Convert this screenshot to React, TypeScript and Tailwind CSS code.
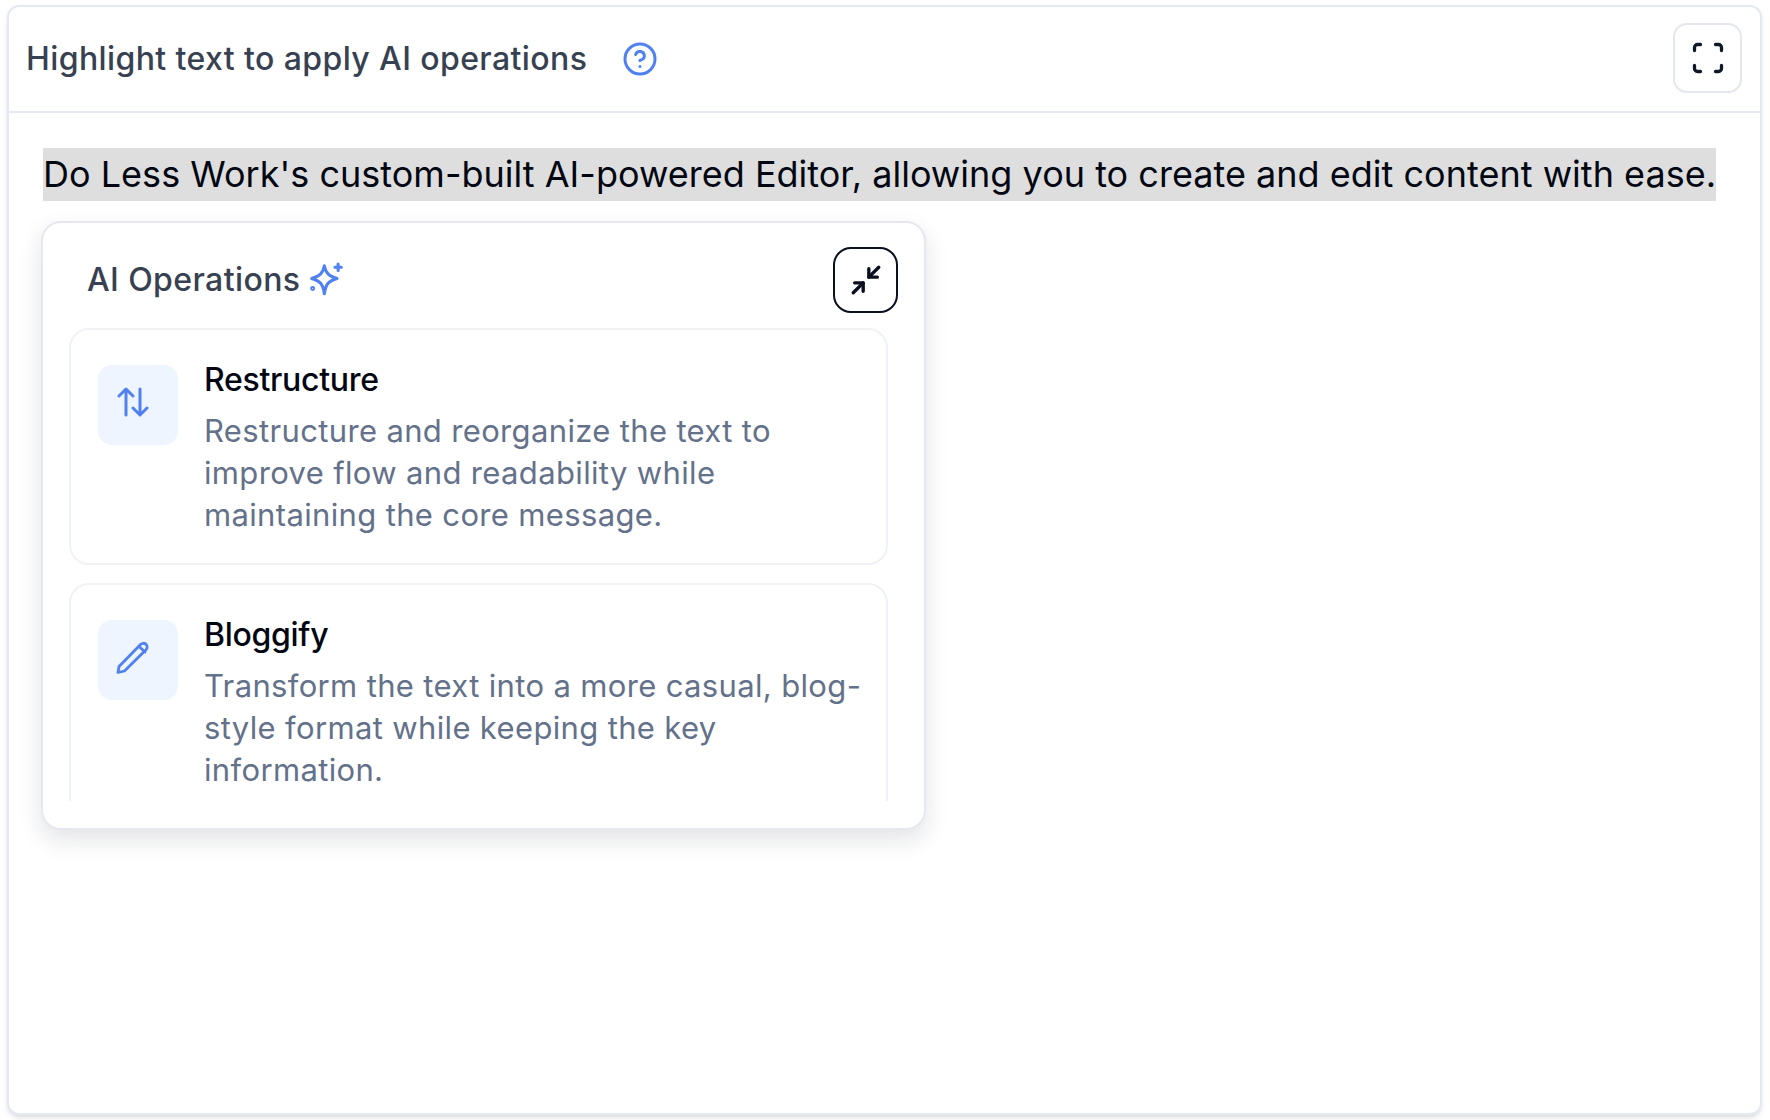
import type { ReactNode } from "react";
import { CircleHelp, Minimize2, Scan } from "lucide-react";

const SparkleIcon = () => (
  <svg width="36" height="36" viewBox="0 0 34 34" fill="none" stroke="#4f82f0" strokeWidth="2.9" strokeLinecap="round" strokeLinejoin="round">
    <path d="M14.500 3.500c1.300 6.800 4 9.700 12 12-8 2.300-10.700 5.200-12 14.500-1.300-9.300-4-12.200-12-14.500 8-2.300 10.700-5.200 12-12z" />
    <path d="M27.500 2v6M24.500 5h6" />
    <circle cx="3.500" cy="25" r="0.9" />
  </svg>
);

const ArrowsIcon = () => (
  <svg width="32" height="32" viewBox="0 0 32 32" fill="none" stroke="#4f82f0" strokeWidth="3" strokeLinecap="round" strokeLinejoin="round">
    <path d="M9 29V3M2 10l7-7 7 7" />
    <path d="M23 3v26M16 22l7 7 7-7" />
  </svg>
);

const PencilIcon = () => (
  <svg width="34" height="34" viewBox="0 0 34 34" fill="none" stroke="#4f82f0" strokeWidth="2.8" strokeLinecap="round" strokeLinejoin="round">
    <path d="M2 32.500l1-6L24.500 4.500c1.500-1.500 4-1.700 5.500-.2s1.500 4 0 5.500L8.500 31z" />
    <path d="M23 6.500l6 5.500" />
  </svg>
);

const OperationCard = ({
  icon,
  title,
  lines,
}: {
  icon: ReactNode;
  title: string;
  lines: string[];
}) => (
  <div className="flex gap-[26px] h-[237px] shrink-0 rounded-[20px] border-2 border-[#f1f2f5] pl-[27px] pt-[35px] bg-white">
    <div className="w-[80px] h-[80px] shrink-0 rounded-[14px] bg-[#eff5ff] flex items-center justify-center pr-[11px] pb-[6px]">
      {icon}
    </div>
    <div className="-mt-[8px]">
      <h3 className="text-[32px] leading-[46px] font-medium text-[#030712] tracking-[-0.3px]">{title}</h3>
      <p className="text-[31px] leading-[42px] text-[#64718a] mt-[7px] whitespace-nowrap tracking-[0.35px]">
        {lines.map((line) => (
          <span key={line} className="block">
            {line}
          </span>
        ))}
      </p>
    </div>
  </div>
);

export default function App() {
  return (
    <div className="h-[1120px] w-[1770px] bg-white pt-[5px] pl-[7px] pr-[8px] pb-[5px] overflow-hidden">
      <div className="h-full rounded-[12px] border-2 border-[#e5e9f2] bg-white shadow-md font-['Inter','Liberation_Sans',sans-serif]">
        <div className="flex items-center justify-between h-[106px] border-b-2 border-[#e4e8f0] pl-[17px] pr-[18px]">
          <div className="flex items-center gap-[35px]">
            <span className="text-[32px] font-medium text-[#374151] tracking-[0.4px]">Highlight text to apply AI operations</span>
            <CircleHelp size={36} strokeWidth={2} className="text-[#4f82f0]" />
          </div>
          <button className="w-[69px] h-[70px] -mt-[2px] rounded-[14px] border-2 border-[#e5e7ee] flex items-center justify-center text-[#111827]">
            <Scan size={36} strokeWidth={2.2} />
          </button>
        </div>
        <div className="pl-[34px] pt-[35px]">
          <div>
            <span className="inline-block h-[53px] bg-[#dedede] text-[36px] leading-[53px] text-[#030712] whitespace-nowrap tracking-[0.015px]">
              Do Less Work's custom-built AI-powered Editor, allowing you to create and edit content with ease.
            </span>
          </div>
          <div className="mt-[20px] -ml-[2px] w-[885px] h-[609px] rounded-[20px] border-2 border-[#e7e8ef] bg-white shadow-[0_10px_24px_rgba(15,23,42,0.12)] pl-[26px] pr-[36px]">
            <div className="flex items-center justify-between h-[105px] pt-[9px] pl-[18px] -mr-[10px]">
              <div className="flex items-center gap-[9px]">
                <span className="text-[32px] font-medium text-[#374151] tracking-[0.4px]">AI Operations</span>
                <SparkleIcon />
              </div>
              <button className="w-[65px] h-[66px] rounded-[18px] border-2 border-[#0b1020] flex items-center justify-center text-[#0b1020]">
                <Minimize2 size={34} strokeWidth={2.4} />
              </button>
            </div>
            <div className="flex flex-col gap-[18px] h-[473px] overflow-hidden">
              <OperationCard
                icon={<ArrowsIcon />}
                title="Restructure"
                lines={[
                  "Restructure and reorganize the text to",
                  "improve flow and readability while",
                  "maintaining the core message.",
                ]}
              />
              <OperationCard
                icon={<PencilIcon />}
                title="Bloggify"
                lines={[
                  "Transform the text into a more casual, blog-",
                  "style format while keeping the key",
                  "information.",
                ]}
              />
            </div>
          </div>
        </div>
      </div>
    </div>
  );
}
